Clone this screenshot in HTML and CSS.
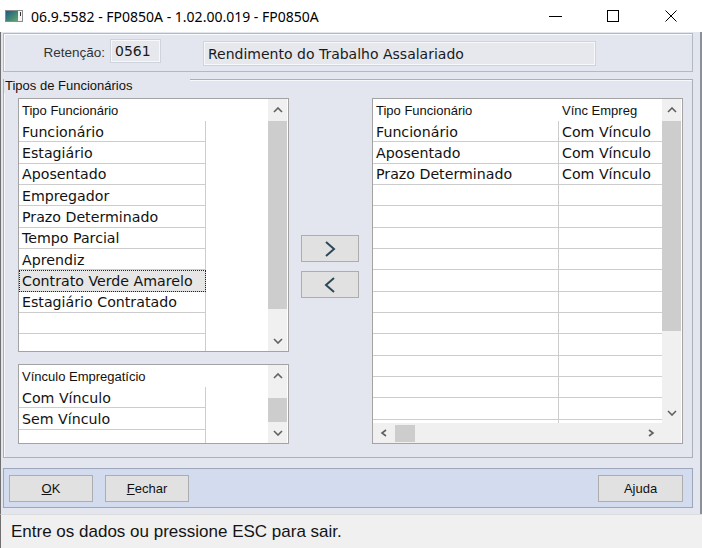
FILE: index.html
```html
<!DOCTYPE html>
<html>
   <head>
      <title>06.9.5582 - FP0850A</title>
      <link rel="stylesheet" href="styles.css">
   </head>
   <body>
      <div class="window">
         <div class="titlebar">
            <svg class="app-icon" width="18" height="12" viewBox="0 0 18 12">
               <defs>
                  <linearGradient id="icg" x1="0" y1="0" x2="1" y2="1">
                     <stop offset="0" stop-color="#1d5a85"/>
                     <stop offset="1" stop-color="#62a86a"/>
                  </linearGradient>
               </defs>
               <rect x="0.5" y="0.5" width="17" height="11" fill="#f4f4f4" stroke="#8c8c8c"/>
               <rect x="1" y="1" width="12" height="10" fill="url(#icg)"/>
               <line x1="15.5" y1="2" x2="15.5" y2="6" stroke="#333"/>
            </svg>
            <span class="title">06.9.5582 - FP0850A - 1.02.00.019 - FP0850A</span>
            <div class="win-controls">
               <span class="win-btn"><svg width="13" height="1"><rect width="13" height="1" fill="#000"/></svg></span>
               <span class="win-btn"><svg width="12" height="12"><rect x="0.5" y="0.5" width="11" height="11" fill="none" stroke="#000"/></svg></span>
               <span class="win-btn"><svg width="12" height="12"><path d="M0.5 0.5 L11.5 11.5 M11.5 0.5 L0.5 11.5" stroke="#000" stroke-width="1"/></svg></span>
            </div>
         </div>
         <div class="client">
            <div class="ret-panel">
               <span class="ret-label">Retenção:</span>
               <div class="field code">0561</div>
               <div class="field desc">Rendimento do Trabalho Assalariado</div>
            </div>
            <div class="group">
               <span class="group-title">Tipos de Funcionários</span>
               <div class="left-col">
                  <div class="grid tipos">
                     <div class="grid-data">
                        <div class="grid-head"><span>Tipo Funcionário</span></div>
                        <div class="grid-row"><span class="cell c1">Funcionário</span><span class="cell blank"></span></div>
                        <div class="grid-row"><span class="cell c1">Estagiário</span><span class="cell blank"></span></div>
                        <div class="grid-row"><span class="cell c1">Aposentado</span><span class="cell blank"></span></div>
                        <div class="grid-row"><span class="cell c1">Empregador</span><span class="cell blank"></span></div>
                        <div class="grid-row"><span class="cell c1">Prazo Determinado</span><span class="cell blank"></span></div>
                        <div class="grid-row"><span class="cell c1">Tempo Parcial</span><span class="cell blank"></span></div>
                        <div class="grid-row"><span class="cell c1">Aprendiz</span><span class="cell blank"></span></div>
                        <div class="grid-row"><span class="cell c1 sel">Contrato Verde Amarelo</span><span class="cell blank"></span></div>
                        <div class="grid-row"><span class="cell c1">Estagiário Contratado</span><span class="cell blank"></span></div>
                        <div class="grid-row"><span class="cell c1"></span><span class="cell blank"></span></div>
                        <div class="grid-row"><span class="cell c1"></span><span class="cell blank"></span></div>
                     </div>
                     <div class="vscroll">
                        <span class="sb-arrow up"><svg width="10" height="6"><polyline points="1,5 5,1 9,5" fill="none" stroke="#606060" stroke-width="1.6"/></svg></span>
                        <span class="thumb"></span>
                        <span class="sb-fill"></span>
                        <span class="sb-arrow down"><svg width="10" height="6"><polyline points="1,1 5,5 9,1" fill="none" stroke="#606060" stroke-width="1.6"/></svg></span>
                     </div>
                  </div>
                  <div class="grid vinc">
                     <div class="grid-data">
                        <div class="grid-head"><span>Vínculo Empregatício</span></div>
                        <div class="grid-row"><span class="cell c1">Com Vínculo</span><span class="cell blank"></span></div>
                        <div class="grid-row"><span class="cell c1">Sem Vínculo</span><span class="cell blank"></span></div>
                        <div class="grid-row"><span class="cell c1"></span><span class="cell blank"></span></div>
                     </div>
                     <div class="vscroll">
                        <span class="sb-arrow up"><svg width="10" height="6"><polyline points="1,5 5,1 9,5" fill="none" stroke="#606060" stroke-width="1.6"/></svg></span>
                        <span class="thumb"></span>
                        <span class="sb-fill"></span>
                        <span class="sb-arrow down"><svg width="10" height="6"><polyline points="1,1 5,5 9,1" fill="none" stroke="#606060" stroke-width="1.6"/></svg></span>
                     </div>
                  </div>
               </div>
               <div class="move-col">
                  <button class="move-btn"><svg width="12" height="16"><polyline points="2,1 10,8 2,15" fill="none" stroke="#2c4858" stroke-width="2"/></svg></button>
                  <button class="move-btn"><svg width="12" height="16"><polyline points="10,1 2,8 10,15" fill="none" stroke="#2c4858" stroke-width="2"/></svg></button>
               </div>
               <div class="grid selected">
                  <div class="grid-main">
                     <div class="grid-data">
                        <div class="grid-head"><span class="h1">Tipo Funcionário</span><span>Vínc Empreg</span></div>
                        <div class="grid-row"><span class="cell c1">Funcionário</span><span class="cell c2">Com Vínculo</span></div>
                        <div class="grid-row"><span class="cell c1">Aposentado</span><span class="cell c2">Com Vínculo</span></div>
                        <div class="grid-row"><span class="cell c1">Prazo Determinado</span><span class="cell c2">Com Vínculo</span></div>
                        <div class="grid-row"><span class="cell c1"></span><span class="cell c2"></span></div>
                        <div class="grid-row"><span class="cell c1"></span><span class="cell c2"></span></div>
                        <div class="grid-row"><span class="cell c1"></span><span class="cell c2"></span></div>
                        <div class="grid-row"><span class="cell c1"></span><span class="cell c2"></span></div>
                        <div class="grid-row"><span class="cell c1"></span><span class="cell c2"></span></div>
                        <div class="grid-row"><span class="cell c1"></span><span class="cell c2"></span></div>
                        <div class="grid-row"><span class="cell c1"></span><span class="cell c2"></span></div>
                        <div class="grid-row"><span class="cell c1"></span><span class="cell c2"></span></div>
                        <div class="grid-row"><span class="cell c1"></span><span class="cell c2"></span></div>
                        <div class="grid-row"><span class="cell c1"></span><span class="cell c2"></span></div>
                        <div class="grid-row"><span class="cell c1"></span><span class="cell c2"></span></div>
                        <div class="grid-row"><span class="cell c1"></span><span class="cell c2"></span></div>
                     </div>
                     <div class="hscroll">
                        <span class="hs-arrow left"><svg width="7" height="8"><polyline points="6,1 2,4 6,7" fill="none" stroke="#606060" stroke-width="1.6"/></svg></span>
                        <span class="hthumb"></span>
                        <span class="sb-fill"></span>
                        <span class="hs-arrow right"><svg width="7" height="8"><polyline points="1,1 5,4 1,7" fill="none" stroke="#606060" stroke-width="1.6"/></svg></span>
                     </div>
                  </div>
                  <div class="vscroll">
                     <span class="sb-arrow up"><svg width="10" height="6"><polyline points="1,5 5,1 9,5" fill="none" stroke="#606060" stroke-width="1.6"/></svg></span>
                     <span class="thumb"></span>
                     <span class="sb-fill"></span>
                     <span class="sb-arrow down"><svg width="10" height="6"><polyline points="1,1 5,5 9,1" fill="none" stroke="#606060" stroke-width="1.6"/></svg></span>
                     <span class="sb-corner"></span>
                  </div>
               </div>
            </div>
            <div class="button-bar">
               <button class="btn"><span><u>O</u>K</span></button>
               <button class="btn"><span><u>F</u>echar</span></button>
               <button class="btn help">Ajuda</button>
            </div>
         </div>
         <div class="statusbar">Entre os dados ou pressione ESC para sair.</div>
      </div>
   </body>
</html>
```

FILE: styles.css
```css
         * {
         margin: 0;
         padding: 0;
         box-sizing: border-box;
         }
         body {
         width: 702px;
         height: 548px;
         overflow: hidden;
         background: #e3e6ee;
         color: #111111;
         font-family: 'Liberation Sans', Arial, sans-serif;
         }
         .window {
         display: flex;
         flex-direction: column;
         height: 548px;
         }
         .titlebar {
         flex: none;
         height: 32px;
         display: flex;
         align-items: center;
         background: #ffffff;
         }
         .app-icon {
         margin-left: 5px;
         }
         .title {
         margin-left: 8px;
         font-family: 'Noto Sans', sans-serif;
         font-size: 14px;
         color: #000000;
         }
         .win-controls {
         display: flex;
         height: 32px;
         margin-left: auto;
         margin-right: 2px;
         }
         .win-btn {
         width: 58px;
         display: flex;
         align-items: center;
         justify-content: center;
         }
         .client {
         flex: 1;
         display: flex;
         flex-direction: column;
         background: #e3e6ee;
         border-left: 1px solid #707070;
         border-right: 2px solid #8c9099;
         padding: 1px 7px 0 2px;
         }
         .ret-panel {
         flex: none;
         height: 39px;
         display: flex;
         border: 1px solid #b3b9c4;
         box-shadow: inset 1px 1px 0 #fafbfc;
         }
         .ret-label {
         width: 101px;
         align-self: center;
         text-align: right;
         font-size: 13.5px;
         color: #333333;
         }
         .field {
         display: flex;
         align-items: center;
         padding-left: 4px;
         font-family: 'DejaVu Sans', Verdana, sans-serif;
         font-size: 14px;
         color: #1a1a1a;
         background: #e6e8ee;
         border: 1px solid #cfd3db;
         box-shadow: inset 0 0 0 1px #f7f8fa;
         }
         .field.code {
         width: 51px;
         height: 24px;
         margin: 5px 0 0 5px;
         }
         .field.desc {
         width: 393px;
         height: 25px;
         margin: 7px 0 0 42px;
         }
         .group {
         position: relative;
         flex: none;
         display: flex;
         height: 379px;
         margin-top: 7px;
         padding: 18px 9px 0 14px;
         border: 1px solid #a9b0bc;
         box-shadow: inset 1px 1px 0 #f7f8fa;
         }
         .group-title {
         position: absolute;
         left: 0;
         top: -2px;
         width: 186px;
         padding-left: 1px;
         font-size: 13px;
         line-height: 15px;
         background: #e3e6ee;
         }
         .left-col {
         display: flex;
         flex-direction: column;
         gap: 12px;
         width: 271px;
         }
         .grid {
         display: flex;
         overflow: hidden;
         background: #ffffff;
         border: 1px solid #a3a3a3;
         }
         .grid.tipos {
         height: 254px;
         }
         .grid.vinc {
         height: 80px;
         }
         .grid.selected {
         width: 311px;
         height: 346px;
         }
         .grid-main {
         flex: 1;
         display: flex;
         flex-direction: column;
         min-width: 0;
         }
         .grid-data {
         flex: 1;
         display: flex;
         flex-direction: column;
         overflow: hidden;
         }
         .grid-head {
         flex: none;
         height: 22px;
         display: flex;
         align-items: center;
         padding-left: 3px;
         font-size: 13px;
         color: #111111;
         }
         .grid-head .h1 {
         width: 186px;
         }
         .grid-row {
         flex: none;
         display: flex;
         height: 21.33px;
         }
         .cell {
         display: flex;
         align-items: center;
         padding: 1px 0 0 3px;
         white-space: nowrap;
         overflow: hidden;
         font-family: 'DejaVu Sans', Verdana, sans-serif;
         font-size: 14.2px;
         color: #121212;
         border-bottom: 1px solid #cdcdcd;
         }
         .cell.c1 {
         width: 187px;
         border-right: 1px solid #cdcdcd;
         }
         .selected .cell.c1 {
         width: 186px;
         }
         .cell.c2 {
         flex: 1;
         }
         .cell.blank {
         flex: 1;
         border-bottom: none;
         }
         .cell.sel {
         background: #e6e6e6;
         outline: 1px dotted #222222;
         outline-offset: -1px;
         }
         .vscroll {
         flex: none;
         display: flex;
         flex-direction: column;
         width: 19px;
         margin-right: 1px;
         background: #f0f0f0;
         }
         .sb-arrow {
         flex: none;
         display: flex;
         align-items: center;
         justify-content: center;
         height: 20px;
         }
         .sb-arrow.up {
         height: 22px;
         }
         .sb-fill {
         flex: 1;
         }
         .thumb {
         flex: none;
         background: #cdcdcd;
         }
         .tipos .thumb {
         height: 188px;
         }
         .vinc .thumb {
         height: 24px;
         margin-top: 11px;
         }
         .selected .thumb {
         height: 210px;
         }
         .sb-corner {
         flex: none;
         height: 20px;
         }
         .hscroll {
         flex: none;
         display: flex;
         align-items: center;
         height: 20px;
         background: #f0f0f0;
         }
         .hs-arrow {
         display: flex;
         align-items: center;
         justify-content: center;
         height: 20px;
         width: 21px;
         }
         .hs-arrow.right {
         width: 22px;
         }
         .hthumb {
         width: 20px;
         height: 17px;
         margin-left: 1px;
         background: #cdcdcd;
         }
         .move-col {
         display: flex;
         flex-direction: column;
         gap: 9px;
         width: 83px;
         padding: 137px 0 0 12px;
         }
         .move-btn {
         display: flex;
         align-items: center;
         justify-content: center;
         width: 58px;
         height: 27px;
         background: #e1e1e1;
         border: 1px solid #adadad;
         }
         .button-bar {
         flex: none;
         display: flex;
         gap: 12px;
         height: 40px;
         margin-top: 10px;
         padding: 6px 9px 0 5px;
         background: #d3dbee;
         border: 1px solid #9da7b9;
         }
         .btn {
         display: flex;
         align-items: center;
         justify-content: center;
         width: 84px;
         height: 27px;
         font-family: 'Liberation Sans', Arial, sans-serif;
         font-size: 13px;
         color: #111111;
         background: #e1e1e1;
         border: 1px solid #adadad;
         }
         .btn.help {
         width: 85px;
         margin-left: auto;
         }
         .statusbar {
         flex: none;
         display: flex;
         align-items: center;
         height: 34px;
         padding: 1px 0 0 10px;
         font-size: 17px;
         color: #141414;
         background: #f0f0f0;
         border-top: 1px solid #dcdcdc;
         border-left: 1px solid #707070;
         }
```
